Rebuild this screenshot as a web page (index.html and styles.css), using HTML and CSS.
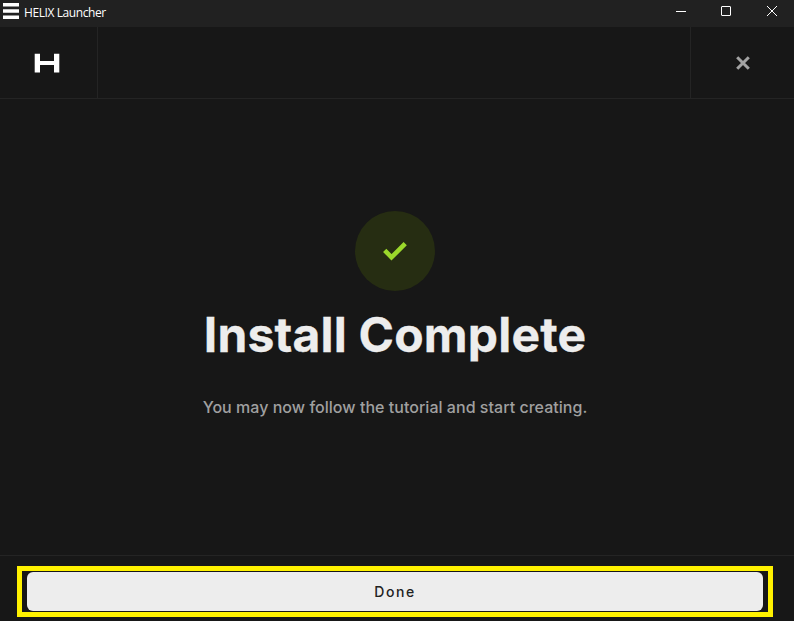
FILE: index.html
```html
<!DOCTYPE html>
<html lang="en">
<head>
<meta charset="utf-8">
<title>HELIX Launcher</title>
<link rel="stylesheet" href="styles.css">
</head>
<body>
<div class="window">
  <header class="titlebar">
    <svg class="app-icon" width="16" height="16" viewBox="0 0 16 16" fill="#fff"><path d="M0 0h16v3.500H0zM0 6.300h16v3.500H0zM0 12.500h16v3.500H0z"/></svg>
    <span class="app-name">HELIX Launcher</span>
    <div class="controls">
      <svg width="12" height="12" viewBox="0 0 12 12"><path d="M2 6.500h10"/></svg>
      <svg width="12" height="12" viewBox="0 0 12 12"><rect x="1.500" y="1.500" width="9" height="9" rx=".5"/></svg>
      <svg width="12" height="12" viewBox="0 0 12 12"><path d="M1 1l10 10M11 1L1 11"/></svg>
    </div>
  </header>
  <nav class="toolbar">
    <div class="logo"><svg width="26" height="20" viewBox="0 0 26 20" fill="#fff"><path d="M.7.700H6v7.300h14V.7h5.300v18.700H20v-7.400H6v7.400H.7z"/></svg></div>
    <div class="close"><svg width="14" height="14" viewBox="0 0 14 14"><path d="M1.200 1.200l11.600 11.600M12.800 1.200L1.200 12.800"/></svg></div>
  </nav>
  <main class="content">
    <div class="badge"><svg width="24" height="20" viewBox="0 0 24 20"><path d="M1.700 9.300L8.500 16.300L22.200 2.700"/></svg></div>
    <h1>Install Complete</h1>
    <p>You may now follow the tutorial and start creating.</p>
  </main>
  <footer class="footer">
    <div class="highlight"><button class="done">Done</button></div>
  </footer>
</div>
</body>
</html>
```
FILE: styles.css
```css
* { box-sizing: border-box; }
body { margin: 0; background: #171717; }
svg { display: block; }
.window {
  width: 794px; height: 621px; overflow: hidden;
  display: flex; flex-direction: column;
  background: #171717; color: #ededed;
  font-family: Inter, "Liberation Sans", sans-serif;
}
.titlebar { height: 27px; flex: none; display: flex; background: #212121; }
.app-icon { margin: 3px 5px 0 3px; }
.app-name { font: 12px/25px "Open Sans", "Noto Sans", sans-serif; letter-spacing: -.42px; color: #fff; }
.controls { margin-left: auto; padding: 5px 16px 0 0; display: flex; gap: 34px; }
.controls svg { fill: none; stroke: #fff; stroke-width: 1; }
.toolbar {
  height: 72px; flex: none; display: flex; justify-content: space-between;
  border-bottom: 1px solid #242424;
}
.logo { width: 98px; padding: 26px 0 0 34px; border-right: 1px solid #242424; }
.close { width: 104px; padding: 29px 0 0 45px; border-left: 1px solid #242424; }
.close svg { fill: none; stroke: #a3a3a3; stroke-width: 3; }
.content {
  flex: 1; padding: 112px 4px 0 0;
  display: flex; flex-direction: column; align-items: center;
}
.badge {
  width: 80px; height: 80px; border-radius: 50%; background: #262d12;
  display: flex; align-items: center; justify-content: center;
}
.badge svg { fill: none; stroke: #9bd82b; stroke-width: 4.600; }
h1 { margin: 15px 0 0; font-size: 48px; line-height: 58px; font-weight: 700; letter-spacing: .18px; -webkit-text-stroke: .3px #ededed; white-space: nowrap; }
p { margin: 33px 0 0; font-size: 16px; line-height: 20px; font-weight: 500; letter-spacing: .03px; color: #a0a0a0; white-space: nowrap; }
.footer { height: 66px; flex: none; border-top: 1px solid #242424; padding: 10px 21px 0 17px; }
.highlight { height: 51px; border: 5px solid #fff200; padding: 1px 5px; }
.done {
  display: block; width: 100%; height: 39px; padding: 0; border: 0; border-radius: 6px;
  background: #ededed; color: #222;
  font: 500 14px/39px Inter, sans-serif; letter-spacing: 1.600px;
}
```
